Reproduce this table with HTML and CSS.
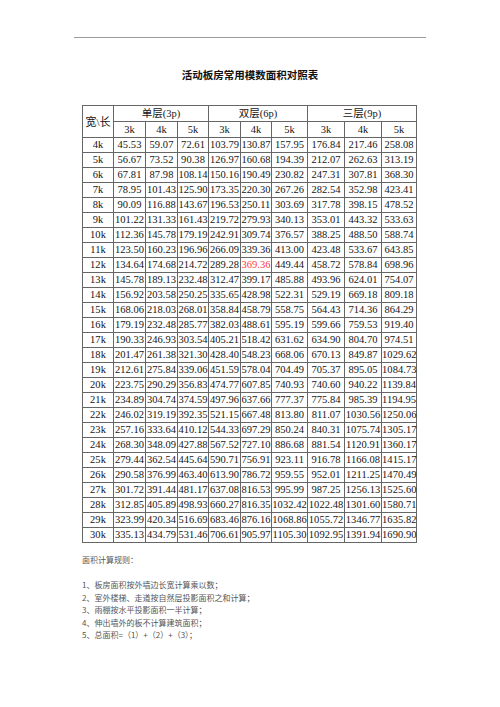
FILE: index.html
```html
<!DOCTYPE html>
<html lang="zh-CN">
<head>
<meta charset="utf-8">
<title>活动板房常用模数面积对照表</title>
<link rel="stylesheet" href="styles.css">
</head>
<body>
<div class="page">
  <div class="rule"></div>
  <h1 class="title">活动板房常用模数面积对照表</h1>
  <table class="grid">
    <colgroup>
      <col class="c31"><col class="c32"><col class="c32"><col class="c31">
      <col class="c32"><col class="c31"><col class="c36">
      <col class="c37"><col class="c37"><col class="c35">
    </colgroup>
    <thead>
      <tr class="hrow">
        <th rowspan="2" class="corner">宽\长</th>
        <th colspan="3">单层(3p)</th>
        <th colspan="3">双层(6p)</th>
        <th colspan="3">三层(9p)</th>
      </tr>
      <tr class="hrow">
        <th>3k</th><th>4k</th><th>5k</th>
        <th>3k</th><th>4k</th><th>5k</th>
        <th>3k</th><th>4k</th><th>5k</th>
      </tr>
    </thead>
    <tbody>
      <tr><td>4k</td><td>45.53</td><td>59.07</td><td>72.61</td><td>103.79</td><td>130.87</td><td>157.95</td><td>176.84</td><td>217.46</td><td>258.08</td></tr>
      <tr><td>5k</td><td>56.67</td><td>73.52</td><td>90.38</td><td>126.97</td><td>160.68</td><td>194.39</td><td>212.07</td><td>262.63</td><td>313.19</td></tr>
      <tr><td>6k</td><td>67.81</td><td>87.98</td><td>108.14</td><td>150.16</td><td>190.49</td><td>230.82</td><td>247.31</td><td>307.81</td><td>368.30</td></tr>
      <tr><td>7k</td><td>78.95</td><td>101.43</td><td>125.90</td><td>173.35</td><td>220.30</td><td>267.26</td><td>282.54</td><td>352.98</td><td>423.41</td></tr>
      <tr><td>8k</td><td>90.09</td><td>116.88</td><td>143.67</td><td>196.53</td><td>250.11</td><td>303.69</td><td>317.78</td><td>398.15</td><td>478.52</td></tr>
      <tr><td>9k</td><td>101.22</td><td>131.33</td><td>161.43</td><td>219.72</td><td>279.93</td><td>340.13</td><td>353.01</td><td>443.32</td><td>533.63</td></tr>
      <tr><td>10k</td><td>112.36</td><td>145.78</td><td>179.19</td><td>242.91</td><td>309.74</td><td>376.57</td><td>388.25</td><td>488.50</td><td>588.74</td></tr>
      <tr><td>11k</td><td>123.50</td><td>160.23</td><td>196.96</td><td>266.09</td><td>339.36</td><td>413.00</td><td>423.48</td><td>533.67</td><td>643.85</td></tr>
      <tr><td>12k</td><td>134.64</td><td>174.68</td><td>214.72</td><td>289.28</td><td class="hot">369.36</td><td>449.44</td><td>458.72</td><td>578.84</td><td>698.96</td></tr>
      <tr><td>13k</td><td>145.78</td><td>189.13</td><td>232.48</td><td>312.47</td><td>399.17</td><td>485.88</td><td>493.96</td><td>624.01</td><td>754.07</td></tr>
      <tr><td>14k</td><td>156.92</td><td>203.58</td><td>250.25</td><td>335.65</td><td>428.98</td><td>522.31</td><td>529.19</td><td>669.18</td><td>809.18</td></tr>
      <tr><td>15k</td><td>168.06</td><td>218.03</td><td>268.01</td><td>358.84</td><td>458.79</td><td>558.75</td><td>564.43</td><td>714.36</td><td>864.29</td></tr>
      <tr><td>16k</td><td>179.19</td><td>232.48</td><td>285.77</td><td>382.03</td><td>488.61</td><td>595.19</td><td>599.66</td><td>759.53</td><td>919.40</td></tr>
      <tr><td>17k</td><td>190.33</td><td>246.93</td><td>303.54</td><td>405.21</td><td>518.42</td><td>631.62</td><td>634.90</td><td>804.70</td><td>974.51</td></tr>
      <tr><td>18k</td><td>201.47</td><td>261.38</td><td>321.30</td><td>428.40</td><td>548.23</td><td>668.06</td><td>670.13</td><td>849.87</td><td>1029.62</td></tr>
      <tr><td>19k</td><td>212.61</td><td>275.84</td><td>339.06</td><td>451.59</td><td>578.04</td><td>704.49</td><td>705.37</td><td>895.05</td><td>1084.73</td></tr>
      <tr><td>20k</td><td>223.75</td><td>290.29</td><td>356.83</td><td>474.77</td><td>607.85</td><td>740.93</td><td>740.60</td><td>940.22</td><td>1139.84</td></tr>
      <tr><td>21k</td><td>234.89</td><td>304.74</td><td>374.59</td><td>497.96</td><td>637.66</td><td>777.37</td><td>775.84</td><td>985.39</td><td>1194.95</td></tr>
      <tr><td>22k</td><td>246.02</td><td>319.19</td><td>392.35</td><td>521.15</td><td>667.48</td><td>813.80</td><td>811.07</td><td>1030.56</td><td>1250.06</td></tr>
      <tr><td>23k</td><td>257.16</td><td>333.64</td><td>410.12</td><td>544.33</td><td>697.29</td><td>850.24</td><td>840.31</td><td>1075.74</td><td>1305.17</td></tr>
      <tr><td>24k</td><td>268.30</td><td>348.09</td><td>427.88</td><td>567.52</td><td>727.10</td><td>886.68</td><td>881.54</td><td>1120.91</td><td>1360.17</td></tr>
      <tr><td>25k</td><td>279.44</td><td>362.54</td><td>445.64</td><td>590.71</td><td>756.91</td><td>923.11</td><td>916.78</td><td>1166.08</td><td>1415.17</td></tr>
      <tr><td>26k</td><td>290.58</td><td>376.99</td><td>463.40</td><td>613.90</td><td>786.72</td><td>959.55</td><td>952.01</td><td>1211.25</td><td>1470.49</td></tr>
      <tr><td>27k</td><td>301.72</td><td>391.44</td><td>481.17</td><td>637.08</td><td>816.53</td><td>995.99</td><td>987.25</td><td>1256.13</td><td>1525.60</td></tr>
      <tr><td>28k</td><td>312.85</td><td>405.89</td><td>498.93</td><td>660.27</td><td>816.35</td><td>1032.42</td><td>1022.48</td><td>1301.60</td><td>1580.71</td></tr>
      <tr><td>29k</td><td>323.99</td><td>420.34</td><td>516.69</td><td>683.46</td><td>876.16</td><td>1068.86</td><td>1055.72</td><td>1346.77</td><td>1635.82</td></tr>
      <tr><td>30k</td><td>335.13</td><td>434.79</td><td>531.46</td><td>706.61</td><td>905.97</td><td>1105.30</td><td>1092.95</td><td>1391.94</td><td>1690.90</td></tr>
    </tbody>
  </table>
  <div class="notes">
    <p class="notes-head">面积计算规则：</p>
    <ol class="rules">
      <li>1、板房面积按外墙边长宽计算乘以数；</li>
      <li>2、室外楼梯、走道按自然层投影面积之和计算；</li>
      <li>3、雨棚按水平投影面积一半计算；</li>
      <li>4、伸出墙外的板不计算建筑面积；</li>
      <li>5、总面积=（1）+（2）+（3）；</li>
    </ol>
  </div>
</div>
</body>
</html>
```

FILE: styles.css
```css
* { box-sizing: border-box; }

html, body {
  margin: 0;
  padding: 0;
  background: #ffffff;
}

.page {
  width: 500px;
  padding-top: 37px;
  font-family: "Liberation Serif", "Noto Sans CJK SC", serif;
  color: #111;
}

.rule {
  margin: 0 74px;
  height: 1px;
  background: #9a9a9a;
}

.title {
  margin: 30px 0 0;
  font-family: "Noto Sans CJK SC", sans-serif;
  font-size: 10.5px;
  line-height: 14px;
  font-weight: 700;
  text-align: center;
  color: #111;
}

.grid {
  margin: 23px 0 0 82px;
  width: 334px;
  table-layout: fixed;
  border-collapse: collapse;
  font-size: 10.5px;
  letter-spacing: 0.05px;
  color: #151515;
}

.c31 { width: 31px; }
.c32 { width: 32px; }
.c35 { width: 35px; }
.c36 { width: 36px; }
.c37 { width: 37px; }

.grid th,
.grid td {
  border: 1px solid #666;
  padding: 0;
  text-align: center;
  vertical-align: middle;
  white-space: nowrap;
  overflow: visible;
  font-weight: 400;
  line-height: 12px;
}

.grid th {
  font-family: "Liberation Serif", "Noto Sans CJK SC", serif;
  font-size: 10.5px;
  letter-spacing: 0;
}

.grid .corner {
  font-size: 11px;
}

.hrow { height: 16px; }
.grid tbody tr { height: 15px; }

.grid .hot { color: #ff3b3b; }

.notes {
  margin-top: 11px;
  padding-left: 82px;
  font-family: "Noto Sans CJK SC", sans-serif;
  font-size: 8px;
  line-height: 12.5px;
  color: #555;
}

.notes-head {
  margin: 0 0 12.5px;
}

.rules {
  list-style: none;
  margin: 0;
  padding: 0;
}
```
